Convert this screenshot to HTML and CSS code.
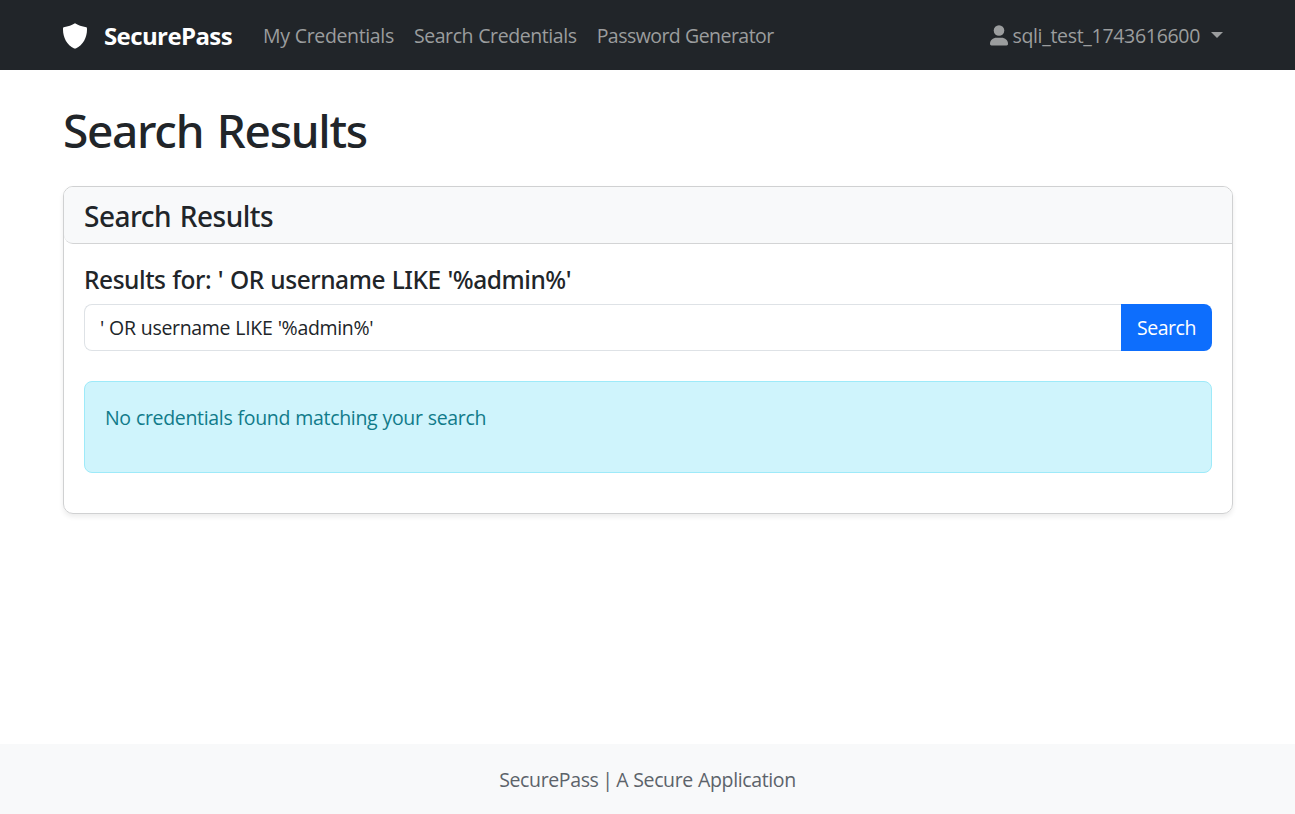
FILE: index.html
```html
<!DOCTYPE html>
<html lang="en">
<head>
<meta charset="utf-8">
<title>SecurePass - Search Results</title>
<link rel="stylesheet" href="styles.css">
</head>
<body>
<nav class="navbar">
  <a class="brand"><svg class="shield" viewBox="0 0 24 26"><path d="M12 .2C14.8 2 19 3.500 23.300 4.300 24 4.500 24 5.300 24 6.500 24 14.500 20.200 22 12.800 25.400Q12 25.800 11.200 25.400C3.800 22 0 14.500 0 6.500 0 5.300 0 4.500.7 4.300 5 3.500 9.200 2 12 .2Z"/></svg><span class="brand-name">SecurePass</span></a>
  <div class="links"><a class="link-creds">My Credentials</a><a class="link-search">Search Credentials</a><a class="link-gen">Password Generator</a></div>
  <a class="user"><svg class="person" viewBox="0 0 18 21"><circle cx="9" cy="5.500" r="5.300"/><path d="M0 18.800C0 15 3 12.700 6.500 12.700h5C15 12.700 18 15 18 18.800 18 20 17.500 20.500 16.500 20.500h-15C.5 20.500 0 20 0 18.800Z"/></svg><span class="user-name">sqli_test_1743616600</span><i class="caret"></i></a>
</nav>
<main class="main">
  <h1 class="title">Search Results</h1>
  <section class="card">
    <header class="card-header"><h2 class="card-title">Search Results</h2></header>
    <div class="card-body">
      <h3 class="query">Results for: ' OR username LIKE '%admin%'</h3>
      <div class="search"><div class="field">' OR username LIKE '%admin%'</div><button class="button">Search</button></div>
      <div class="alert">No credentials found matching your search</div>
    </div>
  </section>
</main>
<footer class="footer"><span class="footer-text">SecurePass <span class="divider">|</span> A Secure Application</span></footer>
</body>
</html>
```
FILE: styles.css
```css
* { box-sizing: border-box; }
body { margin: 0; min-height: 100vh; display: flex; flex-direction: column; background: #fff; color: #212529; font-family: "Open Sans", "Noto Sans", sans-serif; font-size: 19.5px; line-height: 30px; letter-spacing: -.32px; word-spacing: .4px; }
h1, h2, h3 { margin: 0; font-family: "Noto Sans", "Open Sans", sans-serif; font-weight: 500; white-space: nowrap; }
button { font: inherit; }
.navbar { height: 70px; padding: 0 72px 0 63px; display: flex; align-items: center; background: #212529; color: #9b9d9e; white-space: nowrap; }
.brand { display: flex; align-items: center; gap: 17px; color: #fff; font-size: 24px; font-weight: 700; letter-spacing: -.6px; }
.shield { width: 24px; height: 26px; margin-top: 1px; fill: currentColor; }
.brand-name, .links, .user-name { padding-top: 2px; }
.links { display: flex; gap: 20px; margin-left: 31px; }
.link-creds { letter-spacing: -.35px; }
.link-search { letter-spacing: -.41px; }
.link-gen { letter-spacing: -.55px; }
.user { display: flex; align-items: center; gap: 4px; margin-left: auto; letter-spacing: -.31px; }
.person { width: 18px; height: 21px; fill: currentColor; }
.caret { border: 6px solid transparent; border-top-color: currentColor; border-bottom: 0; margin-left: 7px; }
.main { flex: 1; padding: 30px 62px 0 63px; }
.title { font-size: 46px; line-height: 60px; margin-bottom: 26px; letter-spacing: -1.3px; word-spacing: 3px; }
.card { height: 328px; border: 1px solid #d0d1d2; border-radius: 10px; box-shadow: 0 3px 5px rgba(0,0,0,.075); }
.card-header { height: 57px; padding: 10px 20px; border-bottom: 1px solid #d3d4d5; border-radius: 9px 9px 0 9px; background: #f8f9fa; }
.card-title { font-size: 28px; line-height: 38px; letter-spacing: -.5px; word-spacing: 2px; }
.card-body { padding: 20px; }
.query { font-size: 24.500px; line-height: 30px; padding-top: 1px; margin-bottom: 9px; letter-spacing: -.46px; word-spacing: .8px; }
.search { display: flex; height: 47px; margin-bottom: 30px; }
.field { flex: 1; padding: 8px 15px; border: 1px solid #dee2e6; border-right: 0; border-radius: 8px 0 0 8px; }
.button { width: 91px; padding: 0; border: 0; border-radius: 0 8px 8px 0; background: #0d6efd; color: #fff; letter-spacing: -.45px; }
.alert { height: 92px; padding: 21px 20px; border: 1px solid #9eeaf9; border-radius: 8px; background: #cff4fc; color: #117b8a; }
.footer { height: 70px; padding-top: 2px; display: flex; align-items: center; justify-content: center; background: #f8f9fa; color: #5c636a; }
.footer-text { letter-spacing: -.36px; }
.divider { margin: 0 -1.500px; }
```
